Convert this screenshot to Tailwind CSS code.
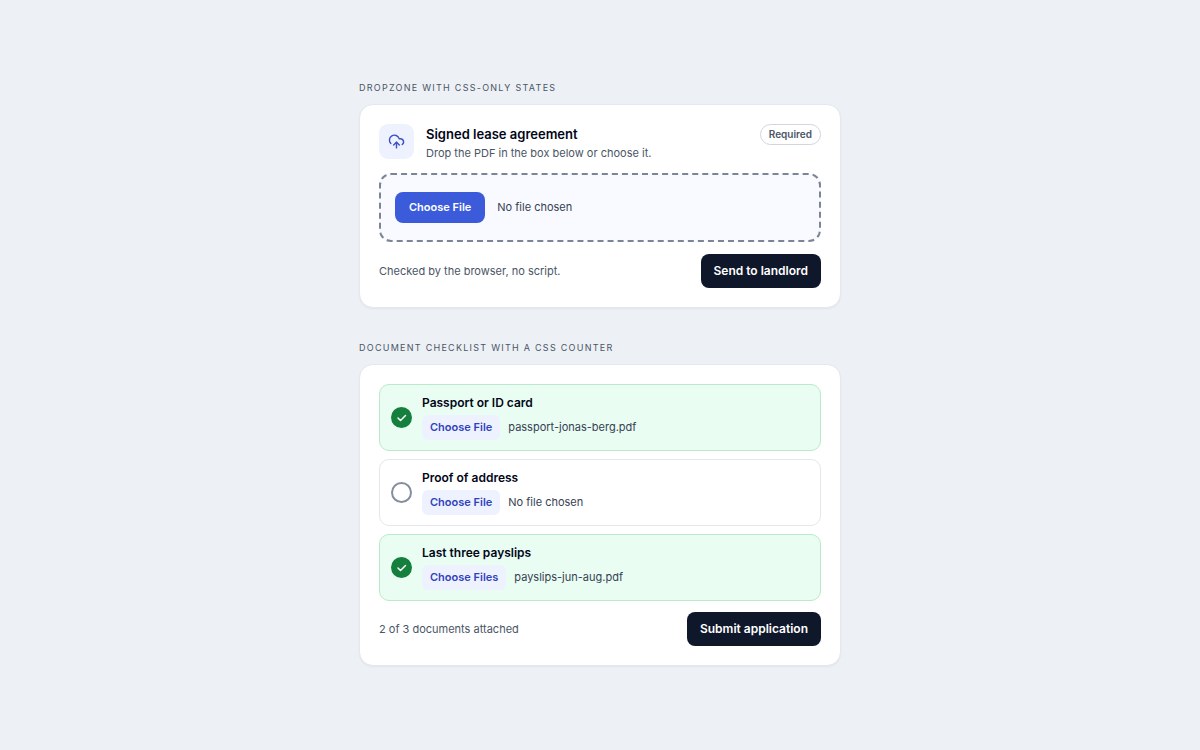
<!DOCTYPE html>
<html lang="en">
<head>
  <meta charset="UTF-8">
  <meta name="viewport" content="width=device-width, initial-scale=1">
  <title>File upload patterns</title>
  <script src="https://cdn.jsdelivr.net/npm/@tailwindcss/browser@4"></script>
</head>
<body class="min-h-screen bg-[#edf1f6] font-['Inter',sans-serif] text-slate-950 antialiased">

  <main class="mx-auto flex w-full max-w-[482px] flex-col gap-8 py-20">

    <!-- Dropzone -->
    <section>
      <h2 class="mb-2 text-[9px] leading-4 tracking-[0.14em] text-gray-600 uppercase">Dropzone with CSS-only states</h2>
      <form class="rounded-[14px] border border-slate-200 bg-white p-[19px] shadow-xs">
        <div class="mb-3 flex items-start gap-3">
          <span class="flex size-[35px] shrink-0 items-center justify-center rounded-[9px] bg-[#eef2ff] text-[#3b4fc9]">
            <svg class="size-[17px]" viewBox="0 0 24 24" fill="none" stroke="currentColor" stroke-width="2" stroke-linecap="round" stroke-linejoin="round" aria-hidden="true">
              <path d="M12 13v8" />
              <path d="M4 14.899A7 7 0 1 1 15.71 8h1.79a4.5 4.5 0 0 1 2.5 8.242" />
              <path d="m8 17 4-4 4 4" />
            </svg>
          </span>
          <div class="flex-1">
            <label for="lease" class="block text-[13px] leading-5 font-semibold">Signed lease agreement</label>
            <p id="lease-hint" class="mt-px text-[11px] leading-4 text-gray-600">Drop the PDF in the box below or choose it.</p>
          </div>
          <span class="rounded-full border border-gray-300 px-2 text-[10px] leading-[19px] font-semibold text-gray-600">Required</span>
        </div>

        <input id="lease" name="lease" type="file" accept="application/pdf" required aria-describedby="lease-hint"
          class="block w-full cursor-pointer rounded-xl border-2 border-dashed border-[#7c8598] bg-[#f8faff] px-[14px] py-[17px] text-[11px] leading-[19px] text-gray-700 file:mr-3 file:cursor-pointer file:rounded-lg file:bg-[#3b5bdb] file:px-[14px] file:py-[6px] file:text-[11px] file:leading-[19px] file:font-semibold file:text-white">

        <div class="mt-3 flex items-center justify-between">
          <p class="text-[11px] leading-4 text-gray-600">Checked by the browser, no script.</p>
          <button type="submit" class="rounded-lg bg-slate-900 px-[13px] py-2 text-[12px] leading-[18px] font-semibold text-white">Send to landlord</button>
        </div>
      </form>
    </section>

    <!-- Checklist -->
    <section>
      <h2 class="mb-2 text-[9px] leading-4 tracking-[0.14em] text-gray-600 uppercase">Document checklist with a CSS counter</h2>
      <form class="rounded-[14px] border border-slate-200 bg-white p-[19px] shadow-xs">
        <ul class="flex flex-col gap-2">
          <li class="flex items-center gap-[10px] rounded-[10px] border border-[#bbe9cd] bg-[#e9fdf2] px-[11px] py-[10px]">
            <span class="flex size-[21px] shrink-0 items-center justify-center rounded-full bg-[#15803d] text-white">
              <svg class="size-3" viewBox="0 0 12 12" fill="none" stroke="currentColor" stroke-width="1.5" stroke-linecap="round" stroke-linejoin="round" aria-hidden="true"><path d="m2 6 2.5 2.5 5-5" /></svg>
            </span>
            <div class="flex-1">
              <label for="passport" class="mb-1 block text-[12px] leading-4 font-semibold">Passport or ID card</label>
              <input id="passport" name="passport" type="file" data-file="passport-jonas-berg.pdf"
                class="block w-full text-[11px] leading-[17px] text-gray-700 file:mr-2 file:rounded-md file:bg-[#eef2ff] file:px-2 file:py-1 file:text-[11px] file:leading-[17px] file:font-semibold file:text-[#3242bd]">
            </div>
          </li>
          <li class="flex items-center gap-[10px] rounded-[10px] border border-gray-200 bg-white px-[11px] py-[10px]">
            <span class="size-[21px] shrink-0 rounded-full border-2 border-[#858da0]"></span>
            <div class="flex-1">
              <label for="address" class="mb-1 block text-[12px] leading-4 font-semibold">Proof of address</label>
              <input id="address" name="address" type="file"
                class="block w-full text-[11px] leading-[17px] text-gray-700 file:mr-2 file:rounded-md file:bg-[#eef2ff] file:px-2 file:py-1 file:text-[11px] file:leading-[17px] file:font-semibold file:text-[#3242bd]">
            </div>
          </li>
          <li class="flex items-center gap-[10px] rounded-[10px] border border-[#bbe9cd] bg-[#e9fdf2] px-[11px] py-[10px]">
            <span class="flex size-[21px] shrink-0 items-center justify-center rounded-full bg-[#15803d] text-white">
              <svg class="size-3" viewBox="0 0 12 12" fill="none" stroke="currentColor" stroke-width="1.5" stroke-linecap="round" stroke-linejoin="round" aria-hidden="true"><path d="m2 6 2.5 2.5 5-5" /></svg>
            </span>
            <div class="flex-1">
              <label for="payslips" class="mb-1 block text-[12px] leading-4 font-semibold">Last three payslips</label>
              <input id="payslips" name="payslips" type="file" multiple data-file="payslips-jun-aug.pdf"
                class="block w-full text-[11px] leading-[17px] text-gray-700 file:mr-2 file:rounded-md file:bg-[#eef2ff] file:px-2 file:py-1 file:text-[11px] file:leading-[17px] file:font-semibold file:text-[#3242bd]">
            </div>
          </li>
        </ul>

        <div class="mt-[11px] flex items-center justify-between">
          <p class="text-[11px] leading-4 text-gray-600">2 of 3 documents attached</p>
          <button type="submit" class="rounded-lg bg-slate-900 px-[13px] py-2 text-[12px] leading-[18px] font-semibold text-white">Submit application</button>
        </div>
      </form>
    </section>
  </main>

  <script>
    // Attach the demo documents
    document.querySelectorAll('input[data-file]').forEach(input => {
      const transfer = new DataTransfer();
      transfer.items.add(new File(['demo'], input.dataset.file, { type: 'application/pdf' }));
      input.files = transfer.files;
    });
  </script>
</body>
</html>
